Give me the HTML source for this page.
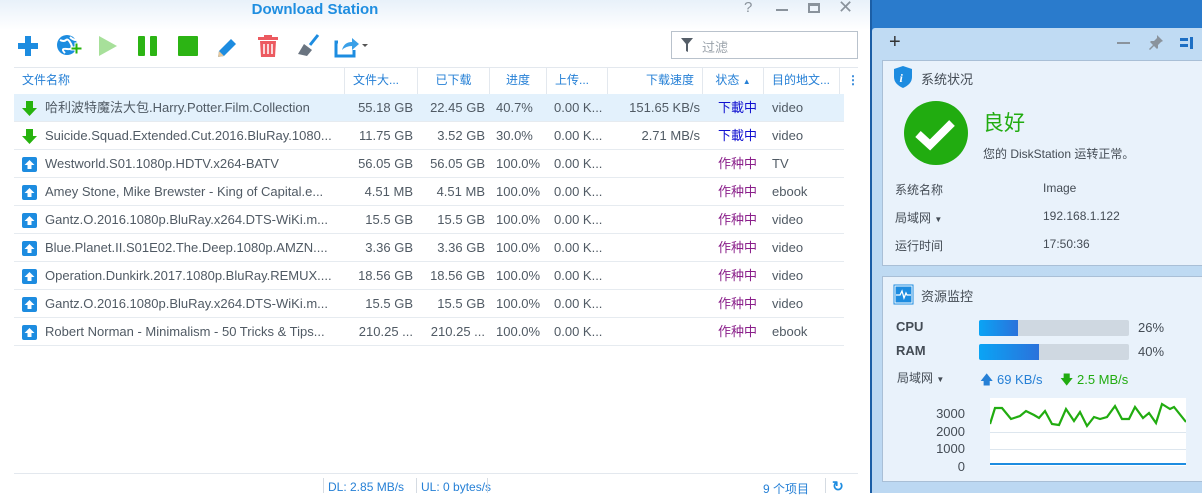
<!DOCTYPE html>
<html><head><meta charset="utf-8"><style>
*{margin:0;padding:0;box-sizing:border-box}
body{width:1202px;height:493px;overflow:hidden;position:relative;background:#fff;font-family:"Liberation Sans","Noto Sans CJK SC",sans-serif;font-size:13px;color:#505a64}
.abs{position:absolute}
#left{position:absolute;left:0;top:0;width:870px;height:493px;background:linear-gradient(#e8f1fa 0,#fff 30px,#fff)}
.title{position:absolute;left:0;width:630px;top:1px;text-align:center;font-weight:bold;color:#1f8ee0;font-size:15px}
.hc{position:absolute;top:-1px;color:#8a939c;font-size:15px}
.th{position:absolute;top:67px;height:27px;line-height:27px;color:#2680d6;font-size:12px;border-right:1px solid #e3e8ee;padding:0 8px}
.row{position:absolute;left:14px;width:830px;height:28px;border-bottom:1px solid #e6ebf0}
.c{position:absolute;top:0;line-height:27px;white-space:nowrap}
.r{text-align:right}
.ic{position:absolute;left:8px;top:7px;width:15px;height:15px}
.sd{color:#8a1e8a}.dl{color:#1010d0}
#right{position:absolute;left:870px;top:0;width:332px;height:493px;background:#2a7bcc;border-left:2px solid #1b5ea6}
#panel{position:absolute;left:0;top:28px;width:332px;height:465px;background:linear-gradient(#c0dbf3,#bcd8f2);border-top-left-radius:3px}
.w{position:absolute;left:10px;width:324px;background:#e9f2fb;border:1px solid #a9bfd6}
.lab{position:absolute;color:#444c55;font-size:12px}
</style></head><body>
<div id="left">
<div class="title">Download Station</div>
<div class="hc" style="left:744px">?</div>
<div class="abs" style="left:776px;top:9px;width:12px;height:2px;background:#8a939c"></div>
<div class="abs" style="left:808px;top:3px;width:12px;height:10px;border:2px solid #8a939c;border-top-width:3px"></div>
<div class="hc" style="left:838px;font-size:18px;top:-3px">✕</div>
<!-- toolbar -->
<svg class="abs" style="left:16px;top:34px" width="360" height="24">
<path d="M9 2h6v7h7v6h-7v7H9v-7H2V9h7z" fill="#1d8ce0"/>
<circle cx="51" cy="11" r="10" fill="#1d8ce0"/><path d="M44 6q4 2 6 0t5 4-4 5-2 4M54 3q3 3 6 3" stroke="#fff" stroke-width="2" fill="none"/><path d="M55 13h4v-4h3v4h4v3h-4v4h-3v-4h-4z" fill="#27b30e" stroke="#fff" stroke-width="1"/>
<path d="M83 2l18 10-18 10z" fill="#a7e09a"/>
<rect x="122" y="2" width="7" height="20" rx="1" fill="#2cb414"/><rect x="134" y="2" width="7" height="20" rx="1" fill="#2cb414"/>
<rect x="162" y="2" width="20" height="20" rx="1" fill="#2cb414"/>
<path d="M203 17l12-12 5 5-12 12-6 1z" fill="#1d8ce0"/><path d="M203 17l5 5-6 1z" fill="#e8c79a"/>
<rect x="242" y="3" width="20" height="3" fill="#ec5a60"/><rect x="248" y="1" width="8" height="3" fill="#ec5a60"/><path d="M244 7h16l-1 16h-14z" fill="#ec5a60"/><path d="M248 10v10M252 10v10M256 10v10" stroke="#fff" stroke-width="1.5"/>
<path d="M302 1l-8 10" stroke="#1d8ce0" stroke-width="3"/><path d="M288 10l8 6-5 6-9-2z" fill="#6a7480"/>
<path d="M322 8h-2v14h18v-6" stroke="#1d8ce0" stroke-width="3" fill="none"/><path d="M326 16q2-8 10-8v-4l7 6-7 6v-4q-6 0-10 4z" fill="#3aa0e8"/><path d="M346 10h6l-3 3z" fill="#555"/>
</svg>
<div class="abs" style="left:671px;top:31px;width:187px;height:28px;border:1px solid #b9c2cc;background:#fff"></div>
<svg class="abs" style="left:680px;top:37px" width="14" height="16"><path d="M1 1h12l-5 6v8l-2-1V7z" fill="#555e68"/></svg>
<div class="abs" style="left:702px;top:37px;color:#9aa2aa">过滤</div>
<div class="abs" style="left:14px;top:67px;width:844px;border-top:1px solid #e3e8ee"></div>
<div class="th" style="left:14px;width:331px">文件名称</div>
<div class="th" style="left:345px;width:73px">文件大...</div>
<div class="th" style="left:418px;width:72px;text-align:center">已下载</div>
<div class="th" style="left:490px;width:57px;text-align:center">进度</div>
<div class="th" style="left:547px;width:61px">上传...</div>
<div class="th" style="left:608px;width:95px;text-align:right">下载速度</div>
<div class="th" style="left:703px;width:61px;text-align:center">状态 <span style="font-size:8px">▲</span></div>
<div class="th" style="left:764px;width:76px">目的地文...</div>
<div class="th" style="left:840px;width:18px;border:none;padding:0 0 0 7px;font-weight:bold">⋮</div>

<div class="row" style="top:94px;background:#e3f1fc">
<svg class="ic" viewBox="0 0 15 15"><path d="M4 0h7v7h4l-7.5 8L0 7h4z" fill="#27b30e"/></svg>
<div class="c" style="left:31px">哈利波特魔法大包.Harry.Potter.Film.Collection</div><div class="c r" style="left:331px;width:68px">55.18 GB</div><div class="c r" style="left:404px;width:67px">22.45 GB</div><div class="c" style="left:482px">40.7%</div><div class="c" style="left:540px">0.00 K...</div><div class="c r" style="left:594px;width:92px">151.65 KB/s</div><div class="c dl" style="left:704px">下載中</div><div class="c" style="left:758px">video</div></div>
<div class="row" style="top:122px">
<svg class="ic" viewBox="0 0 15 15"><path d="M4 0h7v7h4l-7.5 8L0 7h4z" fill="#27b30e"/></svg>
<div class="c" style="left:31px">Suicide.Squad.Extended.Cut.2016.BluRay.1080...</div><div class="c r" style="left:331px;width:68px">11.75 GB</div><div class="c r" style="left:404px;width:67px">3.52 GB</div><div class="c" style="left:482px">30.0%</div><div class="c" style="left:540px">0.00 K...</div><div class="c r" style="left:594px;width:92px">2.71 MB/s</div><div class="c dl" style="left:704px">下載中</div><div class="c" style="left:758px">video</div></div>

<div class="row" style="top:150px"><svg class="ic" viewBox="0 0 15 15"><rect width="15" height="15" rx="2" fill="#1d8ce0"/><path d="M7.5 3l5 5h-3v4h-4V8h-3z" fill="#fff"/></svg><div class="c" style="left:31px">Westworld.S01.1080p.HDTV.x264-BATV</div><div class="c r" style="left:331px;width:68px">56.05 GB</div><div class="c r" style="left:404px;width:67px">56.05 GB</div><div class="c" style="left:482px">100.0%</div><div class="c" style="left:540px">0.00 K...</div><div class="c sd" style="left:704px">作种中</div><div class="c" style="left:758px">TV</div></div>
<div class="row" style="top:178px"><svg class="ic" viewBox="0 0 15 15"><rect width="15" height="15" rx="2" fill="#1d8ce0"/><path d="M7.5 3l5 5h-3v4h-4V8h-3z" fill="#fff"/></svg><div class="c" style="left:31px">Amey Stone, Mike Brewster - King of Capital.e...</div><div class="c r" style="left:331px;width:68px">4.51 MB</div><div class="c r" style="left:404px;width:67px">4.51 MB</div><div class="c" style="left:482px">100.0%</div><div class="c" style="left:540px">0.00 K...</div><div class="c sd" style="left:704px">作种中</div><div class="c" style="left:758px">ebook</div></div>
<div class="row" style="top:206px"><svg class="ic" viewBox="0 0 15 15"><rect width="15" height="15" rx="2" fill="#1d8ce0"/><path d="M7.5 3l5 5h-3v4h-4V8h-3z" fill="#fff"/></svg><div class="c" style="left:31px">Gantz.O.2016.1080p.BluRay.x264.DTS-WiKi.m...</div><div class="c r" style="left:331px;width:68px">15.5 GB</div><div class="c r" style="left:404px;width:67px">15.5 GB</div><div class="c" style="left:482px">100.0%</div><div class="c" style="left:540px">0.00 K...</div><div class="c sd" style="left:704px">作种中</div><div class="c" style="left:758px">video</div></div>
<div class="row" style="top:234px"><svg class="ic" viewBox="0 0 15 15"><rect width="15" height="15" rx="2" fill="#1d8ce0"/><path d="M7.5 3l5 5h-3v4h-4V8h-3z" fill="#fff"/></svg><div class="c" style="left:31px">Blue.Planet.II.S01E02.The.Deep.1080p.AMZN....</div><div class="c r" style="left:331px;width:68px">3.36 GB</div><div class="c r" style="left:404px;width:67px">3.36 GB</div><div class="c" style="left:482px">100.0%</div><div class="c" style="left:540px">0.00 K...</div><div class="c sd" style="left:704px">作种中</div><div class="c" style="left:758px">video</div></div>
<div class="row" style="top:262px"><svg class="ic" viewBox="0 0 15 15"><rect width="15" height="15" rx="2" fill="#1d8ce0"/><path d="M7.5 3l5 5h-3v4h-4V8h-3z" fill="#fff"/></svg><div class="c" style="left:31px">Operation.Dunkirk.2017.1080p.BluRay.REMUX....</div><div class="c r" style="left:331px;width:68px">18.56 GB</div><div class="c r" style="left:404px;width:67px">18.56 GB</div><div class="c" style="left:482px">100.0%</div><div class="c" style="left:540px">0.00 K...</div><div class="c sd" style="left:704px">作种中</div><div class="c" style="left:758px">video</div></div>
<div class="row" style="top:290px"><svg class="ic" viewBox="0 0 15 15"><rect width="15" height="15" rx="2" fill="#1d8ce0"/><path d="M7.5 3l5 5h-3v4h-4V8h-3z" fill="#fff"/></svg><div class="c" style="left:31px">Gantz.O.2016.1080p.BluRay.x264.DTS-WiKi.m...</div><div class="c r" style="left:331px;width:68px">15.5 GB</div><div class="c r" style="left:404px;width:67px">15.5 GB</div><div class="c" style="left:482px">100.0%</div><div class="c" style="left:540px">0.00 K...</div><div class="c sd" style="left:704px">作种中</div><div class="c" style="left:758px">video</div></div>
<div class="row" style="top:318px"><svg class="ic" viewBox="0 0 15 15"><rect width="15" height="15" rx="2" fill="#1d8ce0"/><path d="M7.5 3l5 5h-3v4h-4V8h-3z" fill="#fff"/></svg><div class="c" style="left:31px">Robert Norman - Minimalism - 50 Tricks &amp; Tips...</div><div class="c r" style="left:331px;width:68px">210.25 ...</div><div class="c r" style="left:404px;width:67px">210.25 ...</div><div class="c" style="left:482px">100.0%</div><div class="c" style="left:540px">0.00 K...</div><div class="c sd" style="left:704px">作种中</div><div class="c" style="left:758px">ebook</div></div>

<div class="abs" style="left:14px;top:473px;width:844px;border-top:1px solid #e3e8ee"></div>
<div class="abs" style="left:323px;top:478px;height:15px;border-left:1px solid #d5dbe2"></div>
<div class="abs" style="left:328px;top:480px;color:#2680d6;font-size:12px">DL: 2.85 MB/s</div>
<div class="abs" style="left:416px;top:478px;height:15px;border-left:1px solid #d5dbe2"></div>
<div class="abs" style="left:421px;top:480px;color:#2680d6;font-size:12px">UL: 0 bytes/s</div>
<div class="abs" style="left:487px;top:478px;height:15px;border-left:1px solid #d5dbe2"></div>
<div class="abs" style="left:763px;top:480px;color:#2680d6;font-size:12px">9 个项目</div>
<div class="abs" style="left:825px;top:478px;height:15px;border-left:1px solid #d5dbe2"></div>
<div class="abs" style="left:832px;top:478px;color:#1d8ce0;font-weight:bold;font-size:14px">↻</div>
</div>

<div id="right"><div id="panel">
<div class="abs" style="left:17px;top:3px;font-size:20px;color:#333">+</div>
<div class="abs" style="left:245px;top:14px;width:13px;height:2px;background:#8a939c"></div>
<svg class="abs" style="left:276px;top:6px" width="16" height="16"><path d="M9 1l6 6-2 1-3 3v3l-1 1-3-3-4 4-1-1 4-4-3-3 1-1h3l3-3z" fill="#8a939c"/></svg>
<svg class="abs" style="left:308px;top:9px" width="14" height="12"><rect x="0" y="1" width="8" height="3" fill="#1d6fc4"/><rect x="0" y="7" width="8" height="3" fill="#1d6fc4"/><rect x="10" y="0" width="3" height="12" fill="#1d6fc4"/></svg>
<div class="w" style="top:32px;height:206px">
<svg class="abs" style="left:10px;top:5px" width="20" height="22"><path d="M10 0l9 3v8q0 7-9 11Q1 18 1 11V3z" fill="#1d8ce0"/><text x="6.5" y="16" fill="#fff" font-weight="bold" font-style="italic" font-size="12" font-family="Liberation Serif">i</text></svg>
<div class="lab" style="left:38px;top:8px;font-size:13px">系统状况</div>
<svg class="abs" style="left:20px;top:39px" width="66" height="66"><circle cx="33" cy="33" r="32" fill="#21ac10"/><path d="M15 34l12 11 22-22" stroke="#fff" stroke-width="8" fill="none"/></svg>
<div class="abs" style="left:100px;top:46px;font-size:21px;color:#21ac10">良好</div>
<div class="lab" style="left:100px;top:84px">您的 DiskStation 运转正常。</div>
<div class="lab" style="left:12px;top:120px">系统名称</div><div class="lab" style="left:160px;top:120px">Image</div>
<div class="lab" style="left:12px;top:148px">局域网 <span style="font-size:8px">▼</span></div><div class="lab" style="left:160px;top:148px">192.168.1.122</div>
<div class="lab" style="left:12px;top:176px">运行时间</div><div class="lab" style="left:160px;top:176px">17:50:36</div>
</div>
<div class="w" style="top:248px;height:206px">
<svg class="abs" style="left:10px;top:7px" width="21" height="21"><rect x="0.5" y="0.5" width="20" height="20" fill="#1d8ce0"/><rect x="2" y="2" width="17" height="17" fill="none" stroke="#fff"/><path d="M3 11h4l2-4 2 7 2-5 1 2h4" stroke="#fff" stroke-width="1.3" fill="none"/></svg>
<div class="lab" style="left:38px;top:9px;font-size:13px">资源监控</div>
<div class="lab" style="left:13px;top:42px;font-weight:bold;font-size:13px">CPU</div>
<div class="abs" style="left:96px;top:43px;width:150px;height:16px;border-radius:2px;background:#cfd8e1;overflow:hidden"><div style="width:39px;height:16px;background:linear-gradient(90deg,#0aa4f5,#2b72db)"></div></div>
<div class="lab" style="left:255px;top:43px;font-size:13px">26%</div>
<div class="lab" style="left:13px;top:66px;font-weight:bold;font-size:13px">RAM</div>
<div class="abs" style="left:96px;top:67px;width:150px;height:16px;border-radius:2px;background:#cfd8e1;overflow:hidden"><div style="width:60px;height:16px;background:linear-gradient(90deg,#0aa4f5,#2b72db)"></div></div>
<div class="lab" style="left:255px;top:67px;font-size:13px">40%</div>
<div class="lab" style="left:14px;top:92px">局域网 <span style="font-size:8px">▼</span></div>
<div class="abs" style="left:97px;top:94px;color:#2680d6;font-size:13px">🡅 69 KB/s</div>
<div class="abs" style="left:177px;top:94px;color:#21ac10;font-size:13px">🡇 2.5 MB/s</div>
<div class="lab" style="left:32px;top:128px;font-size:13px;text-align:right;width:50px;line-height:17.7px">3000<br>2000<br>1000<br>0</div>
<svg class="abs" style="left:107px;top:121px" width="196" height="70"><rect width="196" height="68" fill="#fff"/><path d="M0 34.5h196M0 51.5h196" stroke="#dde6ee"/><path d="M0 26L5 10 12 10 21 21 30 18 36 13 44 17 49 20 55 13 62 26 69 27 76 11 84 23 90 14 97 28 104 19 110 21 117 19 125 8 132 21 139 21 145 9 153 20 159 15 166 25 172 6 180 11 184 9 196 24" stroke="#21ac10" stroke-width="2.2" fill="none"/><path d="M0 66h196" stroke="#1d8ce0" stroke-width="2"/></svg>
</div>
</div></div>
</body></html>
